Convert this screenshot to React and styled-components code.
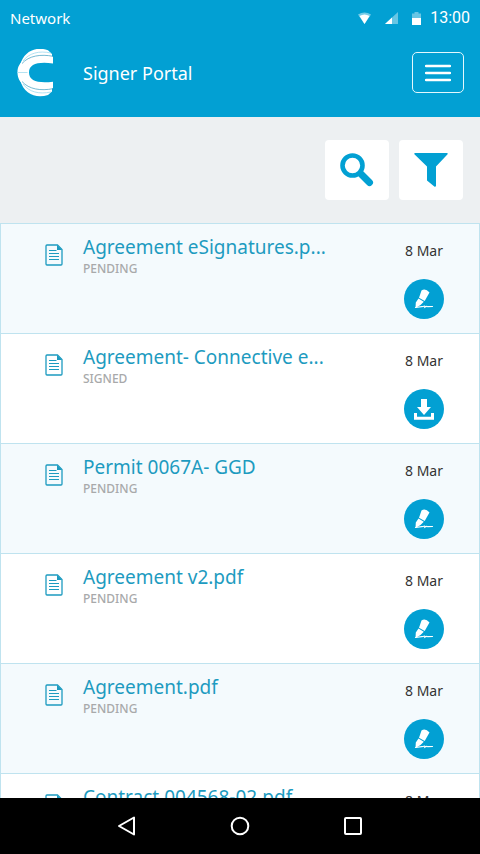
import React from "react"
import styled, { createGlobalStyle, ThemeProvider } from "styled-components"

const theme = {
    colours: {
        blue: "#02a0d3",
        link: "#1d9bc0",
        line: "#bfe3ef",
        tint: "#f4fafd",
        toolbar: "#edf0f2",
        grey: "#a8a9aa",
        text: "#333333",
        white: "#ffffff",
    },
}

const GlobalStyle = createGlobalStyle`
  * {
    box-sizing: border-box;
  }

  body {
    margin: 0;
    font-family: "Noto Sans", "Open Sans", sans-serif;
  }

  button {
    padding: 0;
    border: 0;
    font: inherit;
    cursor: pointer;
  }

  svg {
    display: block;
  }
`

const Screen = styled.div`
  display: flex;
  flex-direction: column;
  height: 100vh;
  background-color: ${props => props.theme.colours.white};
`

const StatusBar = styled.div`
  display: flex;
  flex: none;
  align-items: center;
  justify-content: space-between;
  height: 36px;
  padding: 0 10px;
  background-color: ${props => props.theme.colours.blue};
  color: ${props => props.theme.colours.white};
  font-size: 15px;
  line-height: 20px;
`

const StatusIcons = styled.div`
  display: flex;
  align-items: center;
  gap: 14px;
  font-family: Roboto, sans-serif;
  font-size: 16px;
`

const Clock = styled.time`
  margin-left: -5px;
`

const Header = styled.header`
  display: flex;
  flex: none;
  align-items: center;
  height: 81px;
  padding: 0 16px 8px 17px;
  background-color: ${props => props.theme.colours.blue};
  color: ${props => props.theme.colours.white};

  h1 {
    flex: 1;
    margin: 0 0 0 28px;
    font-size: 18px;
    font-weight: 400;
    line-height: 24px;
  }
`

const MenuButton = styled.button`
  display: grid;
  place-items: center;
  width: 52px;
  height: 41px;
  border: 1px solid #e4f8fd;
  border-radius: 5px;
  background: none;
  color: ${props => props.theme.colours.white};
`

const Toolbar = styled.div`
  display: flex;
  flex: none;
  justify-content: flex-end;
  gap: 10px;
  padding: 23px 17px;
  background-color: ${props => props.theme.colours.toolbar};
`

const ToolButton = styled.button`
  display: grid;
  place-items: center;
  width: 64px;
  height: 60px;
  border-radius: 4px;
  background-color: ${props => props.theme.colours.white};
  color: ${props => props.theme.colours.blue};
`

const List = styled.ul`
  flex: 1;
  min-height: 0;
  margin: 0;
  padding: 0;
  overflow-y: auto;
  scrollbar-width: none;
  list-style: none;
`

const Row = styled.li`
  display: flex;
  height: 110px;
  padding: 0 35px 0 44px;
  border: 1px solid ${props => props.theme.colours.line};
  border-bottom: 0;
  background-color: ${props => props.$tinted ? props.theme.colours.tint : props.theme.colours.white};

  > svg {
    flex: none;
    margin-top: 20px;
    color: ${props => props.theme.colours.link};
  }
`

const Details = styled.div`
  flex: 1;
  min-width: 0;
  padding: 9px 0 0 20px;
`

const Title = styled.a`
  display: block;
  color: ${props => props.theme.colours.link};
  font-size: 19px;
  line-height: 28px;
  text-decoration: none;
  white-space: nowrap;
`

const Status = styled.span`
  display: block;
  color: ${props => props.theme.colours.grey};
  font-size: 12px;
  font-weight: 500;
  line-height: 16px;
`

const Side = styled.div`
  display: flex;
  flex: none;
  flex-direction: column;
  align-items: center;
  gap: 18px;
  padding-top: 17px;
  color: ${props => props.theme.colours.text};
  font-size: 14px;
  line-height: 20px;
`

const ActionButton = styled.button`
  display: grid;
  place-items: center;
  width: 40px;
  height: 40px;
  border-radius: 50%;
  background-color: ${props => props.theme.colours.blue};
  color: ${props => props.theme.colours.white};
`

const SystemBar = styled.nav`
  display: flex;
  flex: none;
  align-items: center;
  justify-content: center;
  gap: 93px;
  height: 56px;
  background-color: #000000;

  button {
    background: none;
    color: ${props => props.theme.colours.white};
  }
`

const Logo = () => (
    <svg width="38" height="48" viewBox="0 0 38 48" aria-hidden="true">
        <path d="M3 16C7 2 19-3 31 1.200L35 5v4H20L6 20zM3 31C7 45 19 50 31 46L35 42.500V38H20L6 27z" fill="#fff" />
        <path d="M36 7.500C15 4 .5 10 .5 23.500S15 43 36 39.300V32.700C21 34.500 12 32 12 23.500s9-11 24-9z" fill="#fff" />
        <path d="M6 12C12 4 22 1.500 34 4M6 35C12 43 22 45.500 34 43" fill="none" stroke="#8fd5ec" strokeWidth=".7" />
        <path d="M5 14.500C12 6.500 24 5 36 7.300M5 32.500C12 40.500 24 42 36 39.700" fill="none" stroke="#3a9cc0" strokeWidth=".7" />
        <path d="M.5 23.500h10" stroke="#b5e2f1" />
    </svg>
)

const Wifi = () => (
    <svg width="13" height="12" viewBox="0 0 13 12" aria-hidden="true">
        <path d="M0 2.500Q6.500-1.500 13 2.500L6.500 12z" fill="#fff" opacity=".45" />
        <path d="M1.500 4Q6.500 1 11.500 4L6.500 12z" fill="#fff" />
    </svg>
)

const Signal = () => (
    <svg width="13" height="12" viewBox="0 0 13 12" aria-hidden="true">
        <path d="M13 0v12H0z" fill="#fff" opacity=".4" />
        <path d="M7 5.500V12H0z" fill="#fff" />
    </svg>
)

const Battery = () => (
    <svg width="9" height="13" viewBox="0 0 9 13" aria-hidden="true">
        <path d="M0 1.500h2.500V0h4v1.500H9V7H0z" fill="#fff" opacity=".4" />
        <path d="M0 6h9v7H0z" fill="#fff" />
    </svg>
)

const MenuIcon = () => (
    <svg width="26" height="18" viewBox="0 0 26 18" aria-hidden="true">
        <path d="M1 2h24M1 9h24M1 16h24" stroke="currentColor" strokeWidth="2.400" strokeLinecap="round" />
    </svg>
)

const SearchIcon = () => (
    <svg width="34" height="34" viewBox="0 0 34 34" aria-hidden="true">
        <g fill="none" stroke="currentColor">
            <circle cx="12.500" cy="12.500" r="10" strokeWidth="4.600" />
            <path d="M21 21l8.500 8.500" strokeWidth="7" strokeLinecap="round" />
        </g>
    </svg>
)

const FilterIcon = () => (
    <svg width="34" height="34" viewBox="0 0 34 34" aria-hidden="true">
        <path d="M1 0h32q1 0 .6 1.200L22 13.500V33q-.5 1.200-1.700.6L13 27.500v-14L.4 1.200Q0 0 1 0z" fill="currentColor" />
    </svg>
)

const DocumentIcon = () => (
    <svg width="18" height="22" viewBox="0 0 18 22" aria-hidden="true">
        <g fill="none" stroke="currentColor">
            <path d="M2 1h10.500L17 5.500V20q0 1-1 1H2q-1 0-1-1V2q0-1 1-1z" strokeWidth="1.300" />
            <path d="M4 6.500h7.500M4 9.500h10M4 12.500h10M4 15.500h10" />
        </g>
        <path d="M12 1v5h5z" fill="currentColor" />
    </svg>
)

const SignIcon = () => (
    <svg width="22" height="22" viewBox="0 0 22 22" aria-hidden="true">
        <path d="M8.500 2.500Q12.500 0 16.500 4.500L11.700 13 6 9.800z" fill="currentColor" />
        <path d="M5.500 10.500l5.300 3.200-3.300 3.300-3.700 2.200L2.500 20l.3-5.500z" fill="currentColor" />
        <path d="M2.500 19.500l8-1.200q2-.6 1.500.7 1.500-1 3-.3l4.500-.2" fill="none" stroke="currentColor" strokeWidth="1.200" strokeLinecap="round" />
    </svg>
)

const DownloadIcon = () => (
    <svg width="20" height="21" viewBox="0 0 20 21" aria-hidden="true">
        <path d="M7 0h6v8h4l-7 8-7-8h4z" fill="currentColor" />
        <path d="M1.500 14v5.200h17V14" fill="none" stroke="currentColor" strokeWidth="3" />
    </svg>
)

const documents = [
    { title: "Agreement eSignatures.p...", status: "PENDING" },
    { title: "Agreement- Connective e...", status: "SIGNED" },
    { title: "Permit 0067A- GGD", status: "PENDING" },
    { title: "Agreement v2.pdf", status: "PENDING" },
    { title: "Agreement.pdf", status: "PENDING" },
    { title: "Contract 004568-02.pdf", status: "PENDING" },
]

const DocumentRow = ({ title, status, tinted }) => {
    const signed = status === "SIGNED"

    return (
        <Row $tinted={tinted}>
            <DocumentIcon />
            <Details>
                <Title href="#">{title}</Title>
                <Status>{status}</Status>
            </Details>
            <Side>
                <time>8 Mar</time>
                <ActionButton aria-label={signed ? "Download" : "Sign"}>
                    {signed ? <DownloadIcon /> : <SignIcon />}
                </ActionButton>
            </Side>
        </Row>
    )
}

const App = () => (
    <ThemeProvider theme={theme}>
        <GlobalStyle />
        <Screen>
            <StatusBar>
                <span>Network</span>
                <StatusIcons>
                    <Wifi />
                    <Signal />
                    <Battery />
                    <Clock>13:00</Clock>
                </StatusIcons>
            </StatusBar>
            <Header>
                <Logo />
                <h1>Signer Portal</h1>
                <MenuButton aria-label="Menu">
                    <MenuIcon />
                </MenuButton>
            </Header>
            <Toolbar>
                <ToolButton aria-label="Search">
                    <SearchIcon />
                </ToolButton>
                <ToolButton aria-label="Filter">
                    <FilterIcon />
                </ToolButton>
            </Toolbar>
            <List>
                {documents.map((item, index) => (
                    <DocumentRow key={item.title} {...item} tinted={index % 2 === 0} />
                ))}
            </List>
            <SystemBar>
                <button aria-label="Back">
                    <svg width="20" height="20" viewBox="0 0 20 20">
                        <path d="M17 1.500v17L2 10z" fill="none" stroke="currentColor" strokeWidth="2" strokeLinejoin="round" />
                    </svg>
                </button>
                <button aria-label="Home">
                    <svg width="20" height="20" viewBox="0 0 20 20">
                        <circle cx="10" cy="10" r="8.300" fill="none" stroke="currentColor" strokeWidth="2" />
                    </svg>
                </button>
                <button aria-label="Recent apps">
                    <svg width="20" height="20" viewBox="0 0 20 20">
                        <rect x="2" y="2" width="16" height="16" rx="1" fill="none" stroke="currentColor" strokeWidth="2" />
                    </svg>
                </button>
            </SystemBar>
        </Screen>
    </ThemeProvider>
)

export default App
